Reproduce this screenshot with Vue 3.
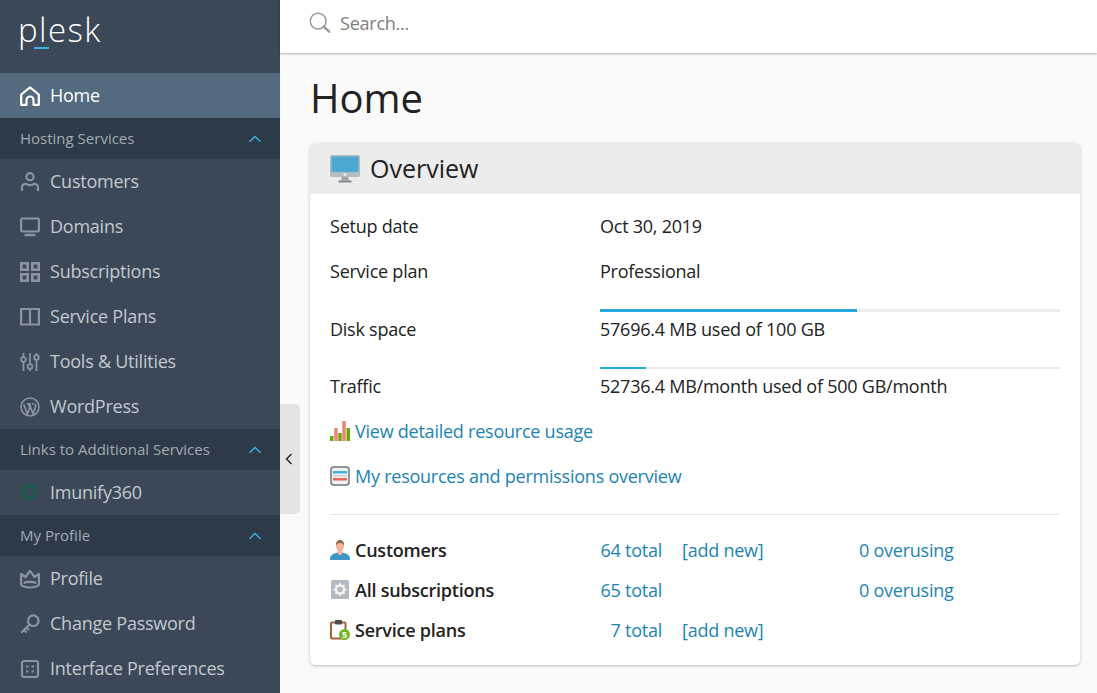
<template>
  <div class="page">
    <aside class="sidebar">
      <div class="logo"><span class="logo-text">plesk</span><i class="logo-line"></i></div>
      <div v-for="group in menu" :key="group.title">
        <div v-if="group.title !== 'top'" class="group-head">
          <span>{{ group.title }}</span>
          <svg width="14" height="8" viewBox="0 0 14 8"><path d="M1.5 6.800 7 1.500l5.500 5.300" fill="none" stroke="#3fb3e6" stroke-width="1.400"/></svg>
        </div>
        <div v-for="item in group.items" :key="item.label" class="nav-item" :class="{ active: item.active }">
          <svg class="nav-icon" width="20" height="20" viewBox="0 0 20 20" fill="none" stroke="currentColor" stroke-width="2.200">
            <template v-if="item.icon === 'home'">
              <path d="M1.200 18.800V8.500L10 1.300l8.800 7.200v10.300h-5.300V14a3.500 3.500 0 0 0-7 0v4.800z" stroke-linejoin="round"/>
            </template>
            <template v-else-if="item.icon === 'user'">
              <circle cx="10" cy="4.800" r="3.600"/>
              <path d="M2 19v-4c0-2 2-3.200 4-3.200 1 .9 2.500 1.300 4 1.300s3-.4 4-1.300c2 0 4 1.200 4 3.200v4" />
            </template>
            <template v-else-if="item.icon === 'monitor'">
              <rect x="1.100" y="1.500" width="17.800" height="13" rx="1"/>
              <path d="M5.500 18h9" stroke-linecap="round" stroke-width="2.400"/>
            </template>
            <template v-else-if="item.icon === 'grid'">
              <rect x="1.300" y="1.300" width="6.400" height="6.400" stroke-width="2.600"/><rect x="12.300" y="1.300" width="6.400" height="6.400" stroke-width="2.600"/>
              <rect x="1.300" y="12.300" width="6.400" height="6.400" stroke-width="2.600"/><rect x="12.300" y="12.300" width="6.400" height="6.400" stroke-width="2.600"/>
            </template>
            <template v-else-if="item.icon === 'book'">
              <path d="M1.100 2h7.400c1 0 1.500.6 1.500 1.500 0-.9.5-1.500 1.500-1.500h7.400v15.500h-7.400c-.8 0-1.500.3-1.500 1 0-.7-.7-1-1.500-1H1.100zM10 3.500v15"/>
            </template>
            <template v-else-if="item.icon === 'sliders'">
              <path d="M3.500 1v4M3.500 10v9M10 1v11M10 17v2M16.500 1v2M16.500 8v11" stroke-width="1.800"/>
              <circle cx="3.500" cy="7.500" r="2.300" stroke-width="1.800"/><circle cx="10" cy="14.500" r="2.300" stroke-width="1.800"/><circle cx="16.500" cy="5.500" r="2.300" stroke-width="1.800"/>
            </template>
            <template v-else-if="item.icon === 'wp'">
              <circle cx="10" cy="10" r="9" stroke-width="1.600"/>
              <path d="M3.800 7.200 7.500 17l2.300-6.500-1.500-3.700M7 6.800h4M9.400 6.800 13 17l2.400-7c.5-1.500.2-2.400-.4-3.300M12 6.800h1.500" stroke-width="1.700"/>
            </template>
            <template v-else-if="item.icon === 'imunify'">
              <path d="M9.500 0l1.800 2.400 2.700-1.200.5 2.900 2.900.5-1.200 2.700L18 9.100l-2.300 1.800 1.200 2.700-2.900.5-.5 2.900-2.700-1.200L9.500 18l-1.800-2.200-2.700 1.200-.5-2.900-2.900-.5 1.200-2.700L0 9.100l2.300-1.800L1.100 4.600 4 4.100l.5-2.900 2.700 1.200z" fill="#1d5a4d" stroke="none"/>
              <circle cx="9.500" cy="9" r="4.400" fill="#3a4858" stroke="none"/>
            </template>
            <template v-else-if="item.icon === 'crown'">
              <path d="M1.100 5l4.400 3L10 1.800 14.500 8l4.400-3v10.500c0 1.500-4 3-8.900 3s-8.900-1.500-8.900-3z" stroke-linejoin="round"/>
              <path d="M4.500 13.800c1.500-1.300 9.500-1.300 11 0" stroke-linecap="round"/>
            </template>
            <template v-else-if="item.icon === 'key'">
              <circle cx="13.300" cy="6.700" r="5.300"/>
              <path d="M9.500 10.500 1.300 18.700M4 16l2.500 2.500M6.500 13.500 9 16"/>
            </template>
            <template v-else-if="item.icon === 'prefs'">
              <rect x="2" y="2" width="16" height="16" rx="2"/>
              <path d="M6 7.500h2.500M11.500 7.500H14M6 12.500h2.500M11.500 12.500H14"/>
            </template>
          </svg>
          <span>{{ item.label }}</span>
        </div>
      </div>
    </aside>

    <button class="collapse">
      <svg width="8" height="12" viewBox="0 0 8 12"><path d="M6.500 1 1.500 6l5 5" fill="none" stroke="#222" stroke-width="1.400"/></svg>
    </button>

    <div class="content">
      <header class="topbar">
        <svg width="22" height="22" viewBox="0 0 24 24" fill="none" stroke="#999"><circle cx="10" cy="10" r="8.600" stroke-width="1.600"/><path d="M16 16l6 5.500" stroke-width="2.600" stroke-linecap="round"/></svg>
        <span>Search...</span>
      </header>

      <main class="main">
        <h1>Home</h1>
        <section class="card">
          <div class="card-head">
            <svg width="32" height="30" viewBox="0 0 32 30">
              <rect x="1" y="1" width="30" height="22" rx="2" fill="#b1bcc3"/>
              <rect x="2.500" y="2.500" width="27" height="15.500" fill="#4ca8d3"/>
              <circle cx="16" cy="20.500" r="1.500" fill="#e8edf0"/>
              <path d="M13 23h6l1 3.500h-8z" fill="#9aa5ac"/>
              <rect x="9.500" y="26.500" width="13" height="2" fill="#7d878e"/>
            </svg>
            <h2>Overview</h2>
          </div>
          <div class="card-body">
            <div class="row"><span class="label">Setup date</span><span>Oct 30, 2019</span></div>
            <div class="row"><span class="label">Service plan</span><span>Professional</span></div>
            <div class="usage first">
              <div class="bar"><div class="fill" :style="{ width: '55.8%' }"></div></div>
              <span class="label">Disk space</span>
              <span class="usage-val">57696.4 MB used of 100 GB</span>
            </div>
            <div class="usage second">
              <div class="bar"><div class="fill" :style="{ width: '10%' }"></div></div>
              <span class="label">Traffic</span>
              <span class="usage-val">52736.4 MB/month used of 500 GB/month</span>
            </div>
            <div class="links">
              <div class="link-row">
                <svg width="20" height="20" viewBox="0 0 20 20">
                  <rect x="0" y="15" width="3.500" height="5" fill="#6aa80a"/>
                  <rect x="4.300" y="7" width="3.400" height="13" fill="#ef8175"/>
                  <rect x="8.300" y="12" width="3.400" height="8" fill="#6aa80a"/>
                  <rect x="12.300" y="0" width="3.400" height="20" fill="#ef8175"/>
                  <rect x="16.500" y="7" width="3.500" height="13" fill="#6aa80a"/>
                </svg>
                <a>View detailed resource usage</a>
              </div>
              <div class="link-row">
                <svg width="20" height="20" viewBox="0 0 20 20">
                  <rect x="1" y="1" width="18" height="18" rx="3" fill="#f2f2f2" stroke="#6e757a" stroke-width="1.500"/>
                  <rect x="3" y="5" width="14" height="2.500" fill="#3fb0e3"/>
                  <rect x="3" y="9" width="14" height="1.500" fill="#c9ced1"/>
                  <rect x="3" y="12" width="14" height="2.500" fill="#e8635c"/>
                </svg>
                <a>My resources and permissions overview</a>
              </div>
            </div>
            <hr />
            <div v-for="s in stats" :key="s.name" class="stat">
              <div class="stat-name">
                <svg v-if="s.icon === 'person'" width="20" height="20" viewBox="0 0 20 20">
                  <path d="M0 19c0-4 3-5.500 7.500-6.500h5c4.500 1 7.500 2.500 7.500 6.500 0 .6-.5 1-1 1H1c-.5 0-1-.4-1-1z" fill="#3d97c6"/>
                  <path d="M7.500 10h5v3.500L10 15.500l-2.500-2z" fill="#f2b597"/>
                  <ellipse cx="10" cy="6" rx="4" ry="5" fill="#f2b597"/>
                  <path d="M6 6C5.500 2 7.500 0 10 0s4.500 2 4 6c-.5-2-1.500-3-4-3S6.500 4 6 6z" fill="#8a6a52"/>
                </svg>
                <svg v-else-if="s.icon === 'gear'" width="20" height="20" viewBox="0 0 20 20">
                  <rect x="1" y="0" width="18" height="19" rx="1.500" fill="#b3bac0"/>
                  <circle cx="10" cy="9.500" r="4" fill="none" stroke="#f0f2f3" stroke-width="2.500"/>
                  <path d="M10 3v2M10 14v2M3.500 9.500h2M14.500 9.500h2M5.500 5l1.400 1.400M13 12.500l1.400 1.400M14.500 5l-1.400 1.400M7 12.500 5.500 13.900" stroke="#f0f2f3" stroke-width="1.800"/>
                </svg>
                <svg v-else width="20" height="20" viewBox="0 0 20 20">
                  <rect x="1" y="2.500" width="14.500" height="16" rx="1" fill="#fff" stroke="#a4623a" stroke-width="2"/>
                  <rect x="5" y="0" width="7" height="4.500" rx="1" fill="#444c52"/>
                  <circle cx="14.500" cy="14.500" r="5.500" fill="#73b820"/>
                  <text x="14.500" y="17.500" text-anchor="middle" class="dollar">5</text>
                </svg>
                <strong>{{ s.name }}</strong>
              </div>
              <a class="stat-total">{{ s.total }}</a>
              <a class="stat-add">{{ s.add }}</a>
              <a>{{ s.over }}</a>
            </div>
          </div>
        </section>
      </main>
    </div>
  </div>
</template>

<script setup>
const menu = [
  { title: 'top', items: [{ label: 'Home', icon: 'home', active: true }] },
  {
    title: 'Hosting Services',
    items: [
      { label: 'Customers', icon: 'user' },
      { label: 'Domains', icon: 'monitor' },
      { label: 'Subscriptions', icon: 'grid' },
      { label: 'Service Plans', icon: 'book' },
      { label: 'Tools & Utilities', icon: 'sliders' },
      { label: 'WordPress', icon: 'wp' },
    ],
  },
  { title: 'Links to Additional Services', items: [{ label: 'Imunify360', icon: 'imunify' }] },
  {
    title: 'My Profile',
    items: [
      { label: 'Profile', icon: 'crown' },
      { label: 'Change Password', icon: 'key' },
      { label: 'Interface Preferences', icon: 'prefs' },
    ],
  },
]

const stats = [
  { name: 'Customers', icon: 'person', total: '64 total', add: '[add new]', over: '0 overusing' },
  { name: 'All subscriptions', icon: 'gear', total: '65 total', add: '', over: '0 overusing' },
  { name: 'Service plans', icon: 'plan', total: '7 total', add: '[add new]', over: '' },
]
</script>

<style>
html, body { margin: 0; height: 100%; overflow: hidden; }
</style>

<style scoped>
.page {
  display: flex;
  height: 693px;
  position: relative;
  overflow: hidden;
  font-family: "Open Sans", "Noto Sans", sans-serif;
  font-size: 18px;
  letter-spacing: -0.24px;
  color: #222;
}

.sidebar {
  flex: 0 0 280px;
  background: #3a4858;
  color: #c3c9cf;
}
.logo {
  height: 73px;
  padding-left: 18px;
  box-sizing: border-box;
  position: relative;
}
.logo-text {
  display: block;
  font-size: 33px;
  font-weight: 300;
  line-height: 59px;
  color: #fff;
  letter-spacing: 1.400px;
}
.logo-line {
  position: absolute;
  left: 34px;
  top: 47px;
  width: 15px;
  height: 2px;
  background: #3fb0e3;
}
.group-head {
  height: 41px;
  background: #2d3a47;
  display: flex;
  align-items: center;
  justify-content: space-between;
  padding: 0 18px 0 20px;
  font-size: 15px;
  letter-spacing: 0;
  color: #a3abb3;
}
.group-head span { padding-bottom: 2px; }
.nav-item {
  height: 45px;
  display: flex;
  align-items: center;
  padding-left: 20px;
  gap: 10px;
}
.nav-item span { padding-bottom: 2px; }
.nav-icon { color: #8b95a0; flex: none; }
.nav-item.active {
  background: #546a7f;
  color: #fff;
}
.nav-item.active .nav-icon { color: #fff; }

.collapse {
  position: absolute;
  left: 280px;
  top: 404px;
  width: 18px;
  padding: 0 2px 0 0;
  box-sizing: content-box;
  height: 110px;
  border: 0;
  background: #e4e4e4;
  border-radius: 0 5px 5px 0;
  display: flex;
  align-items: center;
  justify-content: center;
}

.content {
  flex: 1;
  display: flex;
  flex-direction: column;
  min-width: 0;
  background: #fafafa;
}
.topbar {
  height: 53px;
  box-sizing: border-box;
  padding: 0 0 7px 29px;
  flex: none;
  background: #fff;
  box-shadow: 0 1px 2px rgba(0, 0, 0, 0.3);
  display: flex;
  align-items: center;
  gap: 9px;
  color: #808080;
  position: relative;
}
.main { padding: 0 17px 0 30px; }
h1 {
  margin: 0;
  padding-top: 16px;
  font-size: 40px;
  font-weight: 400;
  letter-spacing: 0;
  line-height: 57px;
  color: #222;
}
.card {
  margin-top: 17px;
  background: #fff;
  border-radius: 5px;
  box-shadow: 0 1px 3px rgba(0, 0, 0, 0.25);
  overflow: hidden;
}
.card-head {
  height: 51px;
  background: #ececec;
  display: flex;
  align-items: center;
  gap: 9px;
  padding-left: 19px;
}
h2 {
  margin: 0;
  padding-bottom: 2px;
  font-size: 25px;
  font-weight: 400;
  letter-spacing: 0;
  color: #222;
}
.card-body { padding: 9px 20px 15px; }
.row {
  display: flex;
  height: 45px;
  align-items: center;
}
.label { flex: 0 0 270px; }
.usage {
  display: grid;
  grid-template-columns: 270px 1fr;
  align-items: center;
  grid-auto-rows: auto;
}
.usage.first { padding-top: 16px; }
.usage.second { padding-top: 21px; }
.usage .bar { grid-column: 2; }
.usage .label, .usage-val { line-height: 34px; }
.usage .label { grid-column: 1; grid-row: 2; }
.usage-val { grid-column: 2; grid-row: 2; }
.bar {
  height: 3px;
  background: #ececec;
}
.second .bar { height: 2px; }
.fill {
  height: 100%;
  background: #28aae1;
}
.links { margin-top: 5px; }
.link-row {
  display: flex;
  align-items: center;
  gap: 5px;
  height: 45px;
}
.link-row a, .stat a { color: #1c83b5; }
hr {
  border: 0;
  border-top: 1px solid #e6e6e6;
  margin: 16px 0 15px;
}
.stat {
  display: flex;
  align-items: center;
  height: 40px;
}
.stat-name {
  flex: 0 0 270px;
  display: flex;
  align-items: center;
  gap: 5px;
}
.stat-name strong { font-weight: 600; }
.stat-total { flex: 0 0 62px; text-align: right; white-space: nowrap; }
.stat-add { flex: 0 0 177px; margin-left: 20px; }
.dollar {
  font-size: 9px;
  font-weight: 700;
  fill: #fff;
}
</style>
